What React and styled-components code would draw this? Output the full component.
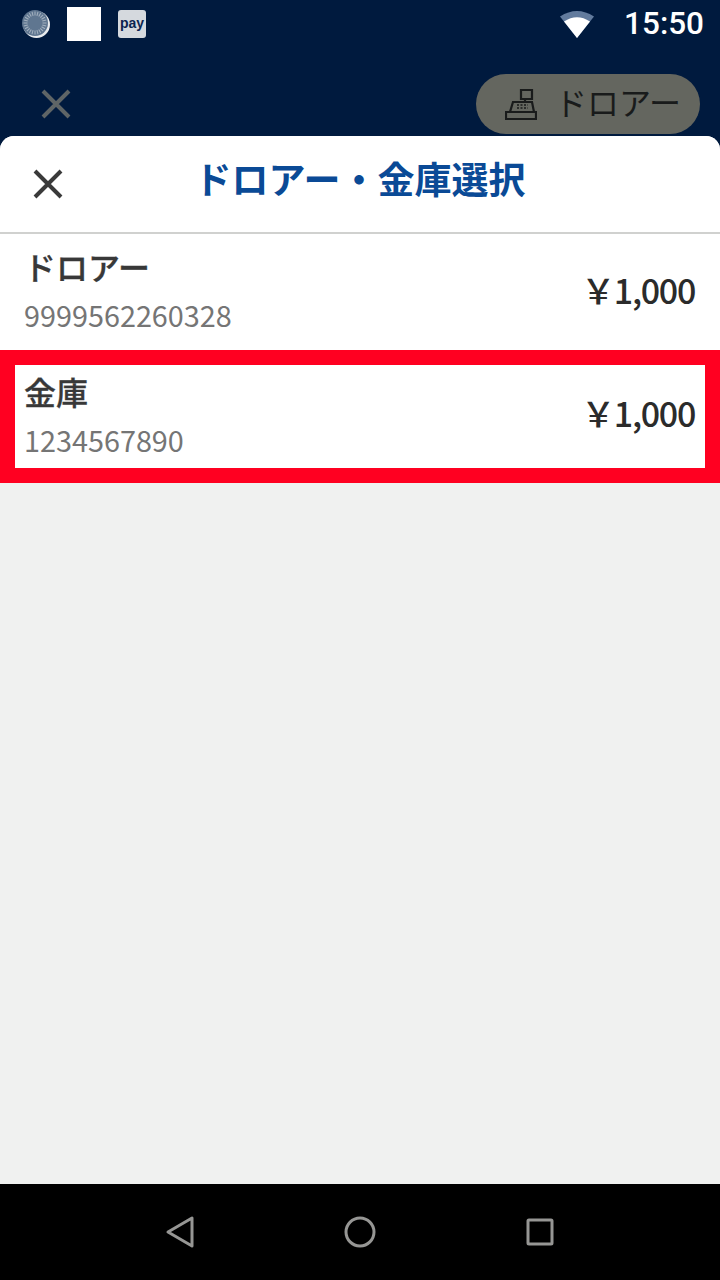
import React from 'react';
import styled, { createGlobalStyle } from 'styled-components';

const Global = createGlobalStyle`
  html, body {
    margin: 0;
    padding: 0;
    background: #000;
  }
  * {
    box-sizing: border-box;
  }
`

const Screen = styled.div`
  width: 720px;
  height: 1280px;
  display: flex;
  flex-direction: column;
  overflow: hidden;
  background: #001a3e;
  font-family: "Noto Sans CJK JP", "Noto Sans", sans-serif;
`

const StatusBar = styled.div`
  height: 48px;
  display: flex;
  align-items: center;
  padding: 0 16px 0 22px;
`

const Spinner = styled.svg`
  width: 28px;
  height: 28px;
  display: block;
`

const WhiteIcon = styled.div`
  width: 34px;
  height: 34px;
  margin-left: 17px;
  background: #fff;
`

const PayIcon = styled.div`
  width: 28px;
  height: 28px;
  margin-left: 17px;
  display: flex;
  align-items: center;
  justify-content: center;
  border-radius: 3px;
  background: #d5d9de;
  color: #0b2450;
  font-family: "Liberation Sans", sans-serif;
  font-size: 14px;
  font-weight: 700;
  line-height: 1;
  padding-bottom: 2px;
`

const StatusRight = styled.div`
  margin-left: auto;
  display: flex;
  align-items: center;
  gap: 30px;
`

const Wifi = styled.svg`
  width: 34px;
  height: 28px;
  display: block;
`

const Clock = styled.span`
  color: #fff;
  font-family: Roboto, sans-serif;
  font-size: 31.500px;
  font-weight: 500;
  line-height: 48px;
`

const TopBar = styled.div`
  height: 88px;
  display: flex;
  align-items: flex-start;
  justify-content: space-between;
  padding: 26px 20px 0 40px;
`

const DimClose = styled.svg`
  width: 32px;
  height: 32px;
  margin-top: 14px;
  display: block;
`

const DrawerButton = styled.div`
  width: 224px;
  height: 60px;
  display: flex;
  align-items: center;
  gap: 18px;
  padding-left: 29px;
  border-radius: 30px;
  background: #64665f;
  color: #191b1b;
  font-size: 32px;
  line-height: 1;
`

const DrawerLabel = styled.span`
  margin-top: -6px;
`

const RegisterIcon = styled.svg`
  width: 32px;
  height: 32px;
  display: block;
  flex-shrink: 0;
`

const Sheet = styled.div`
  flex: 1;
  display: flex;
  flex-direction: column;
  border-radius: 14px 14px 0 0;
  background: #f0f1f0;
  overflow: hidden;
`

const SheetHeader = styled.div`
  height: 98px;
  flex-shrink: 0;
  display: flex;
  align-items: center;
  justify-content: center;
  position: relative;
  background: #fff;
  border-bottom: 2px solid #d0d1cf;
`

const SheetClose = styled.svg`
  position: absolute;
  left: 32px;
  top: 32px;
  width: 32px;
  height: 32px;
`

const Title = styled.h1`
  margin: 0 0 12px;
  color: #0a4a96;
  font-size: 37px;
  font-weight: 700;
  line-height: 1.2;
`

const Row = styled.div`
  height: ${props => props.$selected ? '133px' : '116px'};
  flex-shrink: 0;
  display: flex;
  align-items: center;
  justify-content: space-between;
  background: #fff;
  padding: 0 24px;
  ${props => props.$selected && `
    border: 15px solid #ff0021;
    padding: 0 9px;
  `}
`

const Info = styled.div`
  display: flex;
  flex-direction: column;
  gap: 9px;
  margin-top: -7px;
`

const Name = styled.div`
  color: #383838;
  font-size: 32px;
  font-weight: 500;
  -webkit-text-stroke: 0.3px #383838;
  line-height: 44px;
`

const Code = styled.div`
  color: #757575;
  font-size: 28.800px;
  line-height: 36px;
`

const Price = styled.div`
  color: #2b2b2b;
  font-size: 34px;
  font-weight: 500;
  line-height: 1;
  letter-spacing: -1.300px;
  white-space: nowrap;
  margin-right: 1px;
  margin-bottom: ${props => props.$selected ? '7px' : '4px'};
`

const NavBar = styled.div`
  height: 96px;
  flex-shrink: 0;
  display: flex;
  align-items: center;
  justify-content: center;
  gap: 120px;
  background: #000;
`

const NavIcon = styled.svg`
  width: 60px;
  height: 60px;
  display: block;
  fill: none;
  stroke: #969694;
  stroke-width: 3;
  stroke-linejoin: round;
`

const CloseMark = ({ as: Svg, color, width }) => (
  <Svg viewBox="0 0 32 32">
    <path d="M3 3 L29 29 M29 3 L3 29" stroke={color} strokeWidth={width} fill="none" />
  </Svg>
)

const ticks = Array.from({ length: 24 }, (_, i) => i * 15)

const rows = [
  { name: 'ドロアー', code: '9999562260328', price: '\uFFE51,000' },
  { name: '金庫', code: '1234567890', price: '\uFFE51,000', selected: true },
]

export default function App() {
  return (
    <>
      <Global />
      <Screen>
        <StatusBar>
          <Spinner viewBox="0 0 28 28">
            <circle cx="14.500" cy="14.500" r="13.500" fill="#e8ebee" />
            <circle cx="13" cy="13" r="13" fill="#5f7690" />
            {ticks.map(a => (
              <line key={a} x1="13" y1="1.500" x2="13" y2="5.500" stroke="#a5b2c0" strokeWidth="1" transform={`rotate(${a} 13 13)`} />
            ))}
          </Spinner>
          <WhiteIcon />
          <PayIcon>pay</PayIcon>
          <StatusRight>
            <Wifi viewBox="0 0 34 28">
              <path d="M0 6.500 Q17 -4.500 34 6.500 L17 28 Z" fill="#627b9d" />
              <path d="M4 11.500 Q17 3 30 11.500 L17 28 Z" fill="#fff" />
            </Wifi>
            <Clock>15:50</Clock>
          </StatusRight>
        </StatusBar>
        <TopBar>
          <CloseMark as={DimClose} color="#5f6566" width="4" />
          <DrawerButton>
            <RegisterIcon viewBox="0 0 32 32" fill="none" stroke="#191b1b" strokeWidth="2.200">
              <path d="M16 2 H27 V11 H16 Z" />
              <path d="M20 11 V14" />
              <path d="M8 14 H27 L29 24 H5 Z" />
              <path d="M1 24 H31 V31 H1 Z" />
              <path d="M12 17 H23 M12 20 H23" strokeWidth="1.500" strokeDasharray="2 1.500" />
            </RegisterIcon>
            <DrawerLabel>ドロアー</DrawerLabel>
          </DrawerButton>
        </TopBar>
        <Sheet>
          <SheetHeader>
            <CloseMark as={SheetClose} color="#3a3a3a" width="4" />
            <Title>ドロアー・金庫選択</Title>
          </SheetHeader>
          {rows.map(row => (
            <Row key={row.code} $selected={row.selected}>
              <Info>
                <Name>{row.name}</Name>
                <Code>{row.code}</Code>
              </Info>
              <Price $selected={row.selected}>{row.price}</Price>
            </Row>
          ))}
        </Sheet>
        <NavBar>
          <NavIcon viewBox="0 0 60 60">
            <path d="M18 30 L42 16 V44 Z" />
          </NavIcon>
          <NavIcon viewBox="0 0 60 60">
            <circle cx="30" cy="30" r="14" />
          </NavIcon>
          <NavIcon viewBox="0 0 60 60">
            <rect x="18" y="18" width="24" height="24" rx="1" />
          </NavIcon>
        </NavBar>
      </Screen>
    </>
  )
}
